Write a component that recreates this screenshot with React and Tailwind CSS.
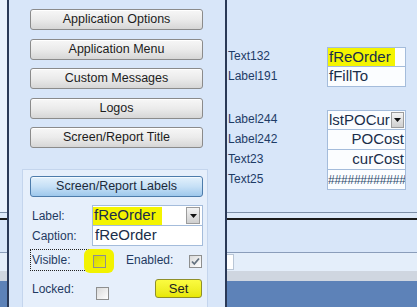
import React from 'react'

const FONT = { fontFamily: '"Liberation Sans", Arial, sans-serif' }

// --- petits contrôles façon Access ---
function GreyButton({ children }) {
  return (
    <div className="h-[21px] w-[173px] rounded-[3px] border border-[#8b8b8b] bg-gradient-to-b from-[#f7f7f7] via-[#ebebeb] to-[#d6d6d6] flex items-center justify-center text-[12.5px] text-[#1c1c1c] shadow-[inset_0_1px_0_#ffffff]">
      {children}
    </div>
  )
}

function DropArrow({ className = '' }) {
  return (
    <div className={`shrink-0 flex items-center justify-center border border-[#9c9c9c] bg-gradient-to-b from-[#f4f4f4] to-[#cfcfcf] ${className}`}>
      <svg width="7" height="4" viewBox="0 0 7 4">
        <path d="M0 0h7L3.5 4z" fill="#111" />
      </svg>
    </div>
  )
}

function CheckBox({ checked = false, tint = false }) {
  return (
    <div
      className={`w-[13px] h-[13px] shrink-0 border border-[#8e8f8f] flex items-center justify-center ${
        tint ? 'bg-gradient-to-br from-[#d8d800] to-[#f4f400]' : 'bg-gradient-to-br from-[#dadada] to-[#ffffff]'
      }`}
    >
      {checked && (
        <svg width="9" height="9" viewBox="0 0 9 9">
          <path d="M1 4.5l2.3 2.5L8 1.5" fill="none" stroke="#63717f" strokeWidth="1.8" />
        </svg>
      )}
    </div>
  )
}

// bandes du bas (bout de formulaire en dessous)
function Bands({ withBox = false }) {
  return (
    <div className="flex flex-col flex-1">
      <div className="h-px shrink-0 bg-[#7d8fa8]" />
      <div className="h-[5px] shrink-0 bg-[#dde9f9]" />
      <div className="h-[2px] shrink-0 bg-[#1b1b1b]" />
      <div className="h-[32px] shrink-0 bg-[#d8e6f9]" />
      <div className="h-px shrink-0 bg-[#8a9dba]" />
      <div className="h-[18px] shrink-0 bg-[#e4eefa] flex items-center">
        {withBox && <div className="w-[7px] h-[16px] bg-white border border-[#b9c6d6] border-l-0" />}
      </div>
      <div className="h-[10px] shrink-0 bg-[#cfd6e0]" />
      <div className="flex-1 bg-[#5d82b8]" />
    </div>
  )
}

function FieldRow({ label, children, first = false }) {
  return (
    <div className="flex items-center h-[20px] shrink-0">
      <div className="w-[100px] shrink-0 pl-px text-[12px] text-[#1e3b66] -mt-[2px]">{label}</div>
      <div
        className={`w-[79px] shrink-0 h-[20px] bg-[#fbfdff] border border-[#a4bcdb] ${first ? '' : 'border-t-0'} flex items-center overflow-hidden`}
      >
        {children}
      </div>
    </div>
  )
}

export default function App() {
  return (
    <div className="flex w-[417px] h-[307px] overflow-hidden bg-[#d8e6f9]" style={FONT}>
      {/* bout de gauche */}
      <div className="w-[7px] shrink-0 flex flex-col bg-[#e9f1fc] overflow-hidden">
        <div className="h-[212px] shrink-0" />
        <Bands />
      </div>
      <div className="w-[2px] shrink-0 bg-[#2a3957]" />

      {/* colonne des boutons + panneau */}
      <div className="w-[216px] shrink-0 flex flex-col">
        <div className="pl-[21px] pt-[9px] flex flex-col gap-[8.5px]">
          <GreyButton>Application Options</GreyButton>
          <GreyButton>Application Menu</GreyButton>
          <GreyButton>Custom Messages</GreyButton>
          <GreyButton>Logos</GreyButton>
          <GreyButton>Screen/Report Title</GreyButton>
        </div>

        <div className="ml-[13px] mt-[21px] w-[186px] flex-1 bg-[#e6effb] border border-[#c4d5ed] border-b-0 pl-[7px] pt-[6px] flex flex-col text-[12px] text-[#1f3a62]">
          <div className="h-[21px] w-[173px] rounded-[3px] border border-[#4d7cab] bg-gradient-to-b from-[#e3f1fc] via-[#c6e0f6] to-[#9ec8ec] flex items-center justify-center text-[12.5px] text-[#1c2a3a] shadow-[inset_0_1px_0_#f4faff]">
            Screen/Report Labels
          </div>

          {/* Label */}
          <div className="flex items-center mt-[8px] h-[21px]">
            <div className="w-[62px] shrink-0 pl-[2px]">Label:</div>
            <div className="w-[111px] shrink-0 h-[21px] bg-white border border-[#a4bcdb] flex items-center justify-between pr-[2px]">
              <span className="h-[18px] bg-[#f4f400] pl-px pr-[6px] flex items-center text-[15px] text-[#1a2e4a]">fReOrder</span>
              <DropArrow className="w-[14px] h-[17px]" />
            </div>
          </div>
          {/* Caption */}
          <div className="flex items-center h-[20px]">
            <div className="w-[62px] shrink-0 pl-[2px]">Caption:</div>
            <div className="w-[111px] shrink-0 h-[20px] bg-white border border-[#a4bcdb] border-t-0 flex items-center pl-[2px] text-[15px] text-[#1a2e4a]">
              fReOrder
            </div>
          </div>

          {/* Visible / Enabled */}
          <div className="flex items-center mt-[3px] h-[22px]">
            <div className="w-[61px] shrink-0 h-[22px] border border-dotted border-[#222] flex items-center pl-[1px]">Visible:</div>
            <div className="w-[30px] shrink-0 h-[24px] -ml-[7px] mt-[2px] rounded-[6px] bg-[#f2f200] flex items-center justify-center">
              <CheckBox tint />
            </div>
            <div className="ml-[12px] w-[63px] shrink-0 text-[12px]">Enabled:</div>
            <div className="mt-[3px]">
              <CheckBox checked />
            </div>
          </div>

          {/* Locked / Set */}
          <div className="flex items-center mt-[8px] h-[19px]">
            <div className="w-[66px] shrink-0 pl-[2px]">Locked:</div>
            <div className="mt-[10px]">
              <CheckBox />
            </div>
            <div className="ml-[46px] w-[47px] shrink-0 h-[19px] rounded-[3px] border border-[#8f8f2a] bg-gradient-to-b from-[#fbfb40] to-[#e8e800] flex items-center justify-center text-[13px] text-[#222]">
              Set
            </div>
          </div>
        </div>
      </div>

      <div className="w-[2px] shrink-0 bg-[#2a3957]" />

      {/* zone de droite */}
      <div className="flex-1 min-w-0 flex flex-col">
        <div className="h-[47px] shrink-0" />
        <FieldRow label="Text132" first>
          <span className="h-[19px] bg-[#f4f400] pl-px pr-[4px] flex items-center text-[15px] text-[#1a2e4a]">fReOrder</span>
        </FieldRow>
        <FieldRow label="Label191">
          <span className="pl-px text-[15px] text-[#1a2e4a]">fFillTo</span>
        </FieldRow>
        <div className="h-[23px] shrink-0" />
        <FieldRow label="Label244" first>
          <div className="flex items-center justify-between w-full pr-px">
            <span className="pl-px text-[15px] text-[#1a2e4a]">lstPOCur</span>
            <DropArrow className="w-[13px] h-[16px]" />
          </div>
        </FieldRow>
        <FieldRow label="Label242">
          <span className="w-full text-right pr-px text-[15px] text-[#1a2e4a]">POCost</span>
        </FieldRow>
        <FieldRow label="Text23">
          <span className="w-full text-right pr-px text-[15px] text-[#1a2e4a]">curCost</span>
        </FieldRow>
        <FieldRow label="Text25">
          <span className="w-full text-[12px] text-[#2b4a6c] tracking-[-0.2px] whitespace-nowrap">############</span>
        </FieldRow>
        <div className="h-[22px] shrink-0" />
        <Bands withBox />
      </div>
    </div>
  )
}
